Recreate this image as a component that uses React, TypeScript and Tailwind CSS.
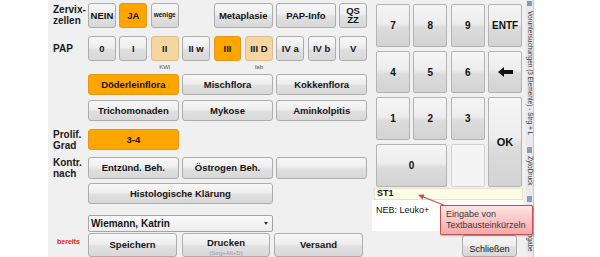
import React from "react";

type V = "gray" | "orange" | "light" | "plain";

function B({
  children,
  className = "",
  v = "gray",
}: {
  children?: React.ReactNode;
  className?: string;
  v?: V;
}) {
  const look =
    v === "orange"
      ? "bg-[#ffa500] border-[#e3981c]"
      : v === "light"
      ? "bg-[#f5d6a0] border-[#d8bd8c]"
      : v === "plain"
      ? "bg-[#f3f3f3] border-[#cfcfcf]"
      : "bg-[linear-gradient(to_bottom,#f7f7f7_0%,#eeeeee_45%,#e0e0e0_55%,#d8d8d8_100%)] border-[#adadad]";
  return (
    <div
      className={`flex items-center justify-center rounded-[3px] border text-center font-bold leading-none text-[#151515] ${look} ${className}`}
    >
      {children}
    </div>
  );
}

function Row({
  label,
  className = "",
  labelClass = "items-center",
  children,
}: {
  label?: React.ReactNode;
  className?: string;
  labelClass?: string;
  children: React.ReactNode;
}) {
  return (
    <div className={`flex ${className}`}>
      <div
        className={`flex w-[35px] shrink-0 text-[10px] font-bold leading-[11px] text-[#1a1a1a] ${labelClass}`}
      >
        <div>{label}</div>
      </div>
      <div className="grid w-[279px] grid-cols-9 gap-x-[3.5px] text-[9.5px]">{children}</div>
    </div>
  );
}

function Num({ children, className = "", v = "gray" }: { children?: React.ReactNode; className?: string; v?: "gray" | "plain" }) {
  const look =
    v === "plain"
      ? "bg-[#f4f4f4] border-[#d2d2d2]"
      : "bg-[linear-gradient(to_bottom,#f5f5f5_0%,#ededed_45%,#dcdcdc_55%,#d3d3d3_100%)] border-[#b3b3b3]";
  return (
    <div className={`flex items-center justify-center rounded-[2px] border text-[10px] font-bold text-[#111] ${look} ${className}`}>
      {children}
    </div>
  );
}

export default function App() {
  return (
    <div className="relative flex h-[257px] w-[600px] overflow-hidden bg-white font-['Liberation_Sans',Arial,sans-serif]">
      <div className="w-[48px] shrink-0" />
      <div className="flex h-full w-[478px] shrink-0 bg-[#f0f0f0]">
        {/* left part */}
        <div className="flex flex-col pl-[5px]">
          <Row className="mt-[3px] h-[26px]" label={<>Zervix-<br />zellen</>}>
            <B className="col-start-1">NEIN</B>
            <B v="orange" className="col-start-2">JA</B>
            <B className="col-start-3 text-[6.5px]">wenige</B>
            <B className="col-span-2 col-start-5">Metaplasie</B>
            <B className="col-span-2 col-start-7">PAP-Info</B>
            <B className="col-start-9 leading-[9px]">QS<br />ZZ</B>
          </Row>
          <Row className="mt-[8px] h-[27px]" label="PAP">
            <B>0</B>
            <B>I</B>
            <B v="light">II</B>
            <B>II w</B>
            <B v="orange">III</B>
            <B v="light">III D</B>
            <B>IV a</B>
            <B>IV b</B>
            <B>V</B>
          </Row>
          <Row className="h-[12px]">
            <div className="col-start-3 pt-[3px] text-center text-[6px] leading-none text-[#555]">KWi</div>
            <div className="col-start-6 pt-[3px] text-center text-[6px] leading-none text-[#555]">fab</div>
          </Row>
          <Row className="mt-[2px] h-[22px]">
            <B v="orange" className="col-span-3">Döderleinflora</B>
            <B className="col-span-3">Mischflora</B>
            <B className="col-span-3">Kokkenflora</B>
          </Row>
          <Row className="mt-[5px] h-[22px]">
            <B className="col-span-3">Trichomonaden</B>
            <B className="col-span-3">Mykose</B>
            <B className="col-span-3">Aminkolpitis</B>
          </Row>
          <Row className="mt-[8px] h-[21px]" labelClass="items-start" label={<>Prolif.<br />Grad</>}>
            <B v="orange" className="col-span-3">3-4</B>
          </Row>
          <Row className="mt-[7px] h-[22px]" labelClass="items-start" label={<>Kontr.<br />nach</>}>
            <B className="col-span-3">Entzünd. Beh.</B>
            <B className="col-span-3">Östrogen Beh.</B>
            <B className="col-span-3" />
          </Row>
          <Row className="mt-[4px] h-[23px]">
            <B className="col-span-6">Histologische Klärung</B>
          </Row>
          <Row className="mt-[11px] h-[15px]">
            <div className="col-span-6 flex items-center justify-between rounded-[2px] border border-[#a3a3a3] bg-linear-to-b from-[#fbfbfb] to-[#ececec] pl-[2px] pr-[4px] text-[10px] font-bold text-[#151515]">
              <span>Wiemann, Katrin</span>
              <svg width="4" height="3" viewBox="0 0 4 3">
                <path d="M0 0h4L2 3z" fill="#333" />
              </svg>
            </div>
          </Row>
          <div className="mt-[3px] flex h-[24px]">
            <div className="w-[35px] shrink-0 pl-[4px] pt-[5px] text-[7px] font-bold leading-none text-[#e02020]">bereits</div>
            <B className="w-[89px] border-[#79bfe4] text-[9.5px]">Speichern</B>
            <B className="ml-[5px] w-[88px] flex-col justify-start pt-[4px] text-[9.5px]">
              <span>Drucken</span>
              <span className="mt-[2px] text-[6px] font-normal text-[#999]">(Strg+Alt+D)</span>
            </B>
            <B className="ml-[4px] w-[89px] text-[9.5px]">Versand</B>
          </div>
        </div>

        {/* right part */}
        <div className="ml-[5px] flex w-[151px] flex-col">
          <div className="mt-[4px] grid grid-cols-4 grid-rows-[43px_42px_43px_43px] gap-x-[3.5px] gap-y-[4px] pl-[4px] pr-[1px]">
            <Num>7</Num>
            <Num>8</Num>
            <Num>9</Num>
            <Num>ENTF</Num>
            <Num>4</Num>
            <Num>5</Num>
            <Num>6</Num>
            <Num>
              <svg width="15" height="10" viewBox="0 0 15 10">
                <path d="M0 5 L6 0 L6 3 L15 3 L15 7 L6 7 L6 10 Z" fill="#111" />
              </svg>
            </Num>
            <Num>1</Num>
            <Num>2</Num>
            <Num>3</Num>
            <Num className="row-span-2 text-[11px]">OK</Num>
            <Num className="col-span-2">0</Num>
            <Num v="plain" />
          </div>
          <div className="ml-[2px] mt-[1px] flex h-[12px] items-center border border-[#e4e4d0] bg-[#fdfde6] pl-[2px] text-[9px] font-bold text-[#111]">
            ST1
          </div>
          <div className="h-[38px] bg-white pl-[4px] pt-[6px] text-[9px] leading-none text-[#111]">NEB: Leuko+</div>
          <div className="mt-[4px] flex justify-end pr-[6px]">
            <B className="h-[22px] w-[55px] items-start pt-[9px] text-[9px] font-normal">Schließen</B>
          </div>
        </div>
      </div>

      {/* side strip */}
      <div className="flex h-full w-[8px] shrink-0 flex-col items-center border-r border-[#c9c9c9] bg-[#e9e9e9] text-[6.5px] leading-none text-[#333]">
        <div className="mt-[1px] h-[5px] w-[5px] bg-[#7d9bbb]" />
        <div className="mt-[5px] [writing-mode:vertical-rl] whitespace-nowrap">Voruntersuchungen (3 Elemente) - Strg + L</div>
        <div className="mt-[12px] h-[6px] w-[5px] bg-[#8aa0b8]" />
        <div className="mt-[3px] [writing-mode:vertical-rl] whitespace-nowrap">ZytoDruck</div>
        <div className="mt-[10px] h-[6px] w-[5px] bg-[#8aa0b8]" />
        <div className="mt-[6px] [writing-mode:vertical-rl] whitespace-nowrap">Befundeingabe</div>
      </div>

      {/* tooltip */}
      <div className="absolute left-[440px] top-[205px] flex h-[30px] w-[93px] flex-col justify-center rounded-[1px] border border-[#c0504d] bg-linear-to-b from-[#fde4e4] to-[#f3a9a9] pl-[5px] text-[9px] leading-[11px] text-[#3a3a3a] shadow-[1px_1px_2px_rgba(0,0,0,0.25)]">
        <span>Eingabe von</span>
        <span>Textbausteinkürzeln</span>
      </div>
      <svg className="absolute left-[412px] top-[190px]" width="40" height="22" viewBox="0 0 40 22">
        <line x1="34" y1="16" x2="9" y2="6" stroke="#c0504d" strokeWidth="1.3" />
        <path d="M6 4.8 L12.5 4.5 L10.5 9.5 Z" fill="#c0504d" />
      </svg>
    </div>
  );
}
